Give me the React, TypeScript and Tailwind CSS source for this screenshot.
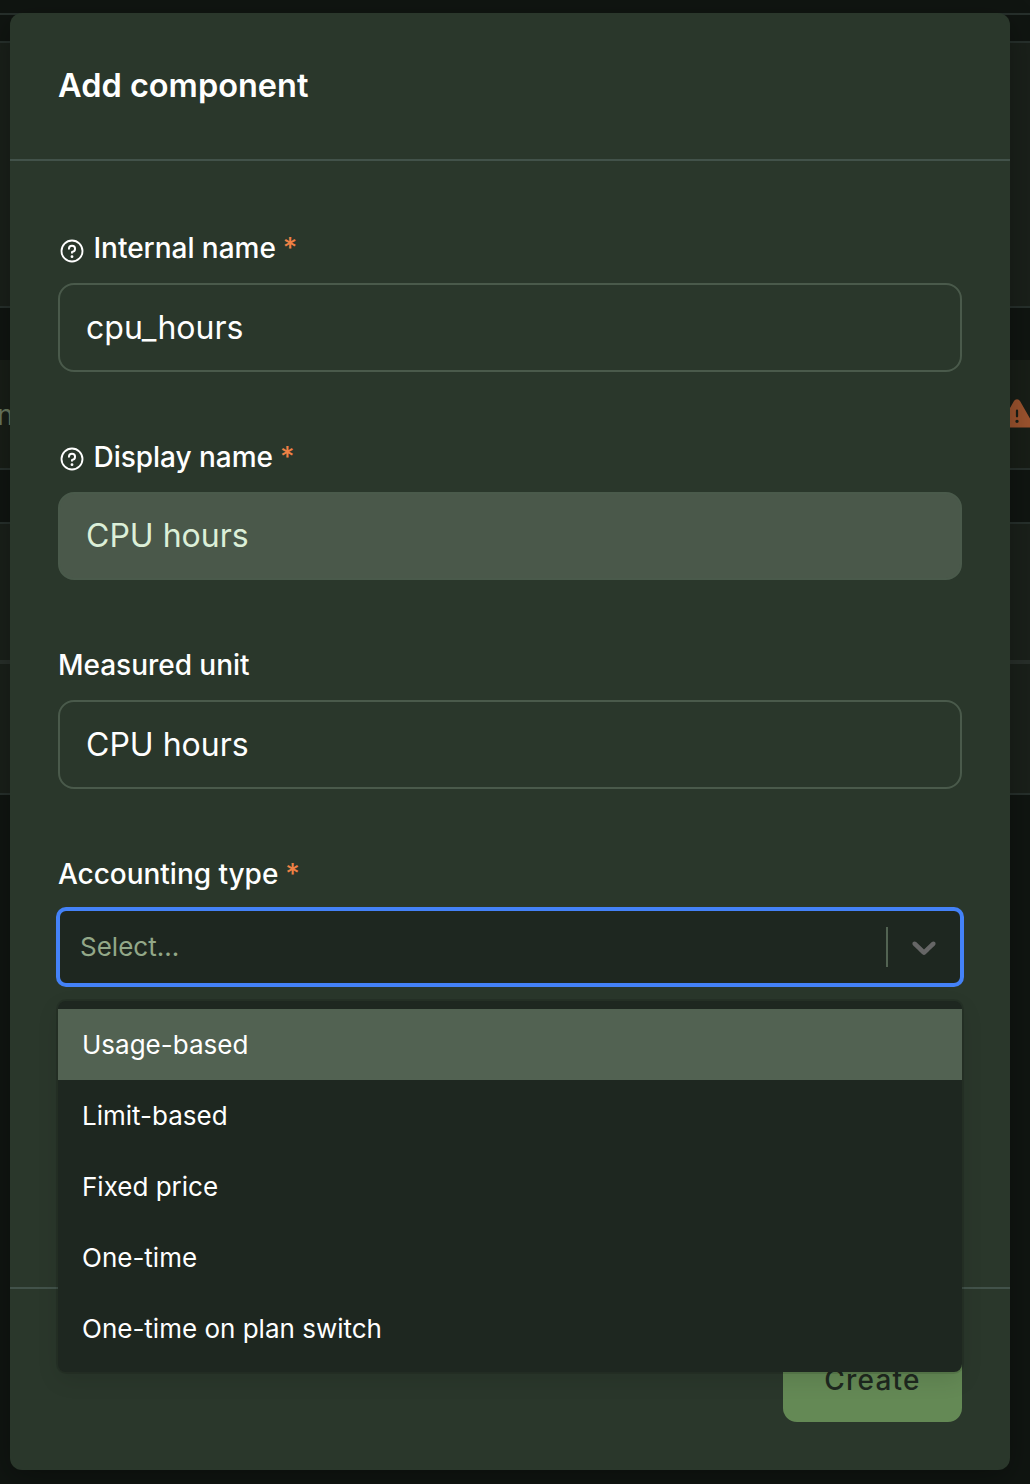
import { PiWarningFill } from "react-icons/pi";

const OPTIONS = ["Usage-based", "Limit-based", "Fixed price", "One-time", "One-time on plan switch"];

function HelpIcon() {
  return (
    <svg viewBox="0 0 256 256" fill="none" className="mt-[3px] mr-[7.5px] size-7 shrink-0">
      <circle cx="128" cy="128" r="96" stroke="currentColor" strokeWidth="17" />
      <circle cx="128" cy="180" r="13" fill="currentColor" />
      <path
        d="M128 144v-8a28 28 0 1 0-28-28"
        stroke="currentColor"
        strokeWidth="18"
        strokeLinecap="round"
        strokeLinejoin="round"
      />
    </svg>
  );
}

function Backdrop() {
  return (
    <div className="absolute inset-0 flex flex-col bg-[#101511]">
      <div className="h-[15px] shrink-0 border-b-2 border-[#27302c]" />
      <div className="h-7 shrink-0 border-b-2 border-[#27302c]" />
      <div className="h-[265px] shrink-0 border-b-2 border-[#27302c] bg-[#1a201a]" />
      <div className="h-[52px] shrink-0" />
      <div className="flex h-[110px] shrink-0 items-center justify-between border-b-2 border-[#27302c] bg-[#181e17]">
        <span className="-ml-[3px] pt-[2px] text-[28px] leading-none text-[#68785f]">n</span>
        <PiWarningFill className="-mr-[5px] size-9 shrink-0 text-[#9c532e]" />
      </div>
      <div className="h-[54px] shrink-0 border-b-2 border-[#27302c]" />
      <div className="h-[140px] shrink-0 border-b-4 border-[#282f2a] bg-[#1a201a]" />
      <div className="h-[131px] shrink-0 border-b-2 border-[#27302c] bg-[#1a201a]" />
    </div>
  );
}

function Label({ text, help, required }: { text: string; help?: boolean; required?: boolean }) {
  return (
    <div className="mb-[13px] flex h-[42px] items-center text-[28px] font-medium leading-[42px] tracking-[-0.03px] text-white">
      {help && <HelpIcon />}
      <span className="-mt-0.5">{text}</span>
      {required && <span className="-mt-0.5 ml-[7px] text-[#ef8145]">*</span>}
    </div>
  );
}

function Field(props: { label: string; value: string; help?: boolean; required?: boolean; disabled?: boolean }) {
  return (
    <div className="mb-[65px]">
      <Label text={props.label} help={props.help} required={props.required} />
      <div
        className={
          "flex h-[88.5px] items-center rounded-2xl border-2 border-[#4a5a4b] px-[26px] pt-[0.5px] text-[32px] " +
          (props.disabled ? "bg-[#4a584a] text-[#dcefd8]" : "text-white")
        }
      >
        {props.value}
      </div>
    </div>
  );
}

function Select() {
  return (
    <div className="relative">
      <div className="flex h-[76px] items-center rounded-lg border-2 border-[#4482f8] bg-[#1e2720] pl-5 shadow-[0_0_0_2px_#4482f8]">
        <span className="flex-1 text-[26px] text-[#93a888]">Select...</span>
        <span className="h-10 w-0.5 bg-[#526352]" />
        <svg viewBox="0 0 20 20" className="mx-4 size-10 fill-[#666666]">
          <path d="M4.516 7.548c0.436-0.446 1.043-0.481 1.576 0l3.908 3.747 3.908-3.747c0.533-0.481 1.141-0.446 1.574 0 0.436 0.445 0.408 1.197 0 1.615-0.406 0.418-4.695 4.502-4.695 4.502-0.217 0.223-0.502 0.335-0.787 0.335s-0.57-0.112-0.789-0.335c0 0-4.287-4.084-4.695-4.502s-0.436-1.17 0-1.615z" />
        </svg>
      </div>
      <div className="absolute top-full z-10 mt-4 w-full rounded-lg bg-[#1e2720] py-2 shadow-[0_0_0_2px_rgba(0,0,0,0.1),0_8px_22px_rgba(0,0,0,0.1)]">
        {OPTIONS.map((option, i) => (
          <div
            key={option}
            className={"flex h-[71px] items-center px-6 text-[26px] text-white " + (i === 0 ? "bg-[#526252]" : "")}
          >
            {option}
          </div>
        ))}
      </div>
    </div>
  );
}

export default function App() {
  return (
    <div className="relative h-[1484px] w-[1030px] overflow-hidden font-['Inter',sans-serif]">
      <Backdrop />
      <div className="relative mr-5 ml-[10px] mt-[13px] flex h-[1457px] flex-col rounded-xl bg-[#2a372b] shadow-[0_8px_30px_rgba(0,0,0,0.3)]">
        <div className="flex h-[148px] shrink-0 items-center border-b-2 border-[#42524a] px-12 pt-px text-[32.5px] font-semibold text-white">
          Add component
        </div>
        <div className="h-[1128px] shrink-0 border-b-2 border-[#42524a] px-12 pt-[67px]">
          <Field label="Internal name" value="cpu_hours" help required />
          <Field label="Display name" value="CPU hours" help required disabled />
          <Field label="Measured unit" value="CPU hours" />
          <Label text="Accounting type" required />
          <Select />
        </div>
        <div className="flex flex-1 justify-end p-12">
          <div className="flex w-[179px] items-center justify-center rounded-[14px] bg-[#648955] pt-px text-[28px] font-medium tracking-[1.2px] text-[#1e281f]">
            Create
          </div>
        </div>
      </div>
    </div>
  );
}
